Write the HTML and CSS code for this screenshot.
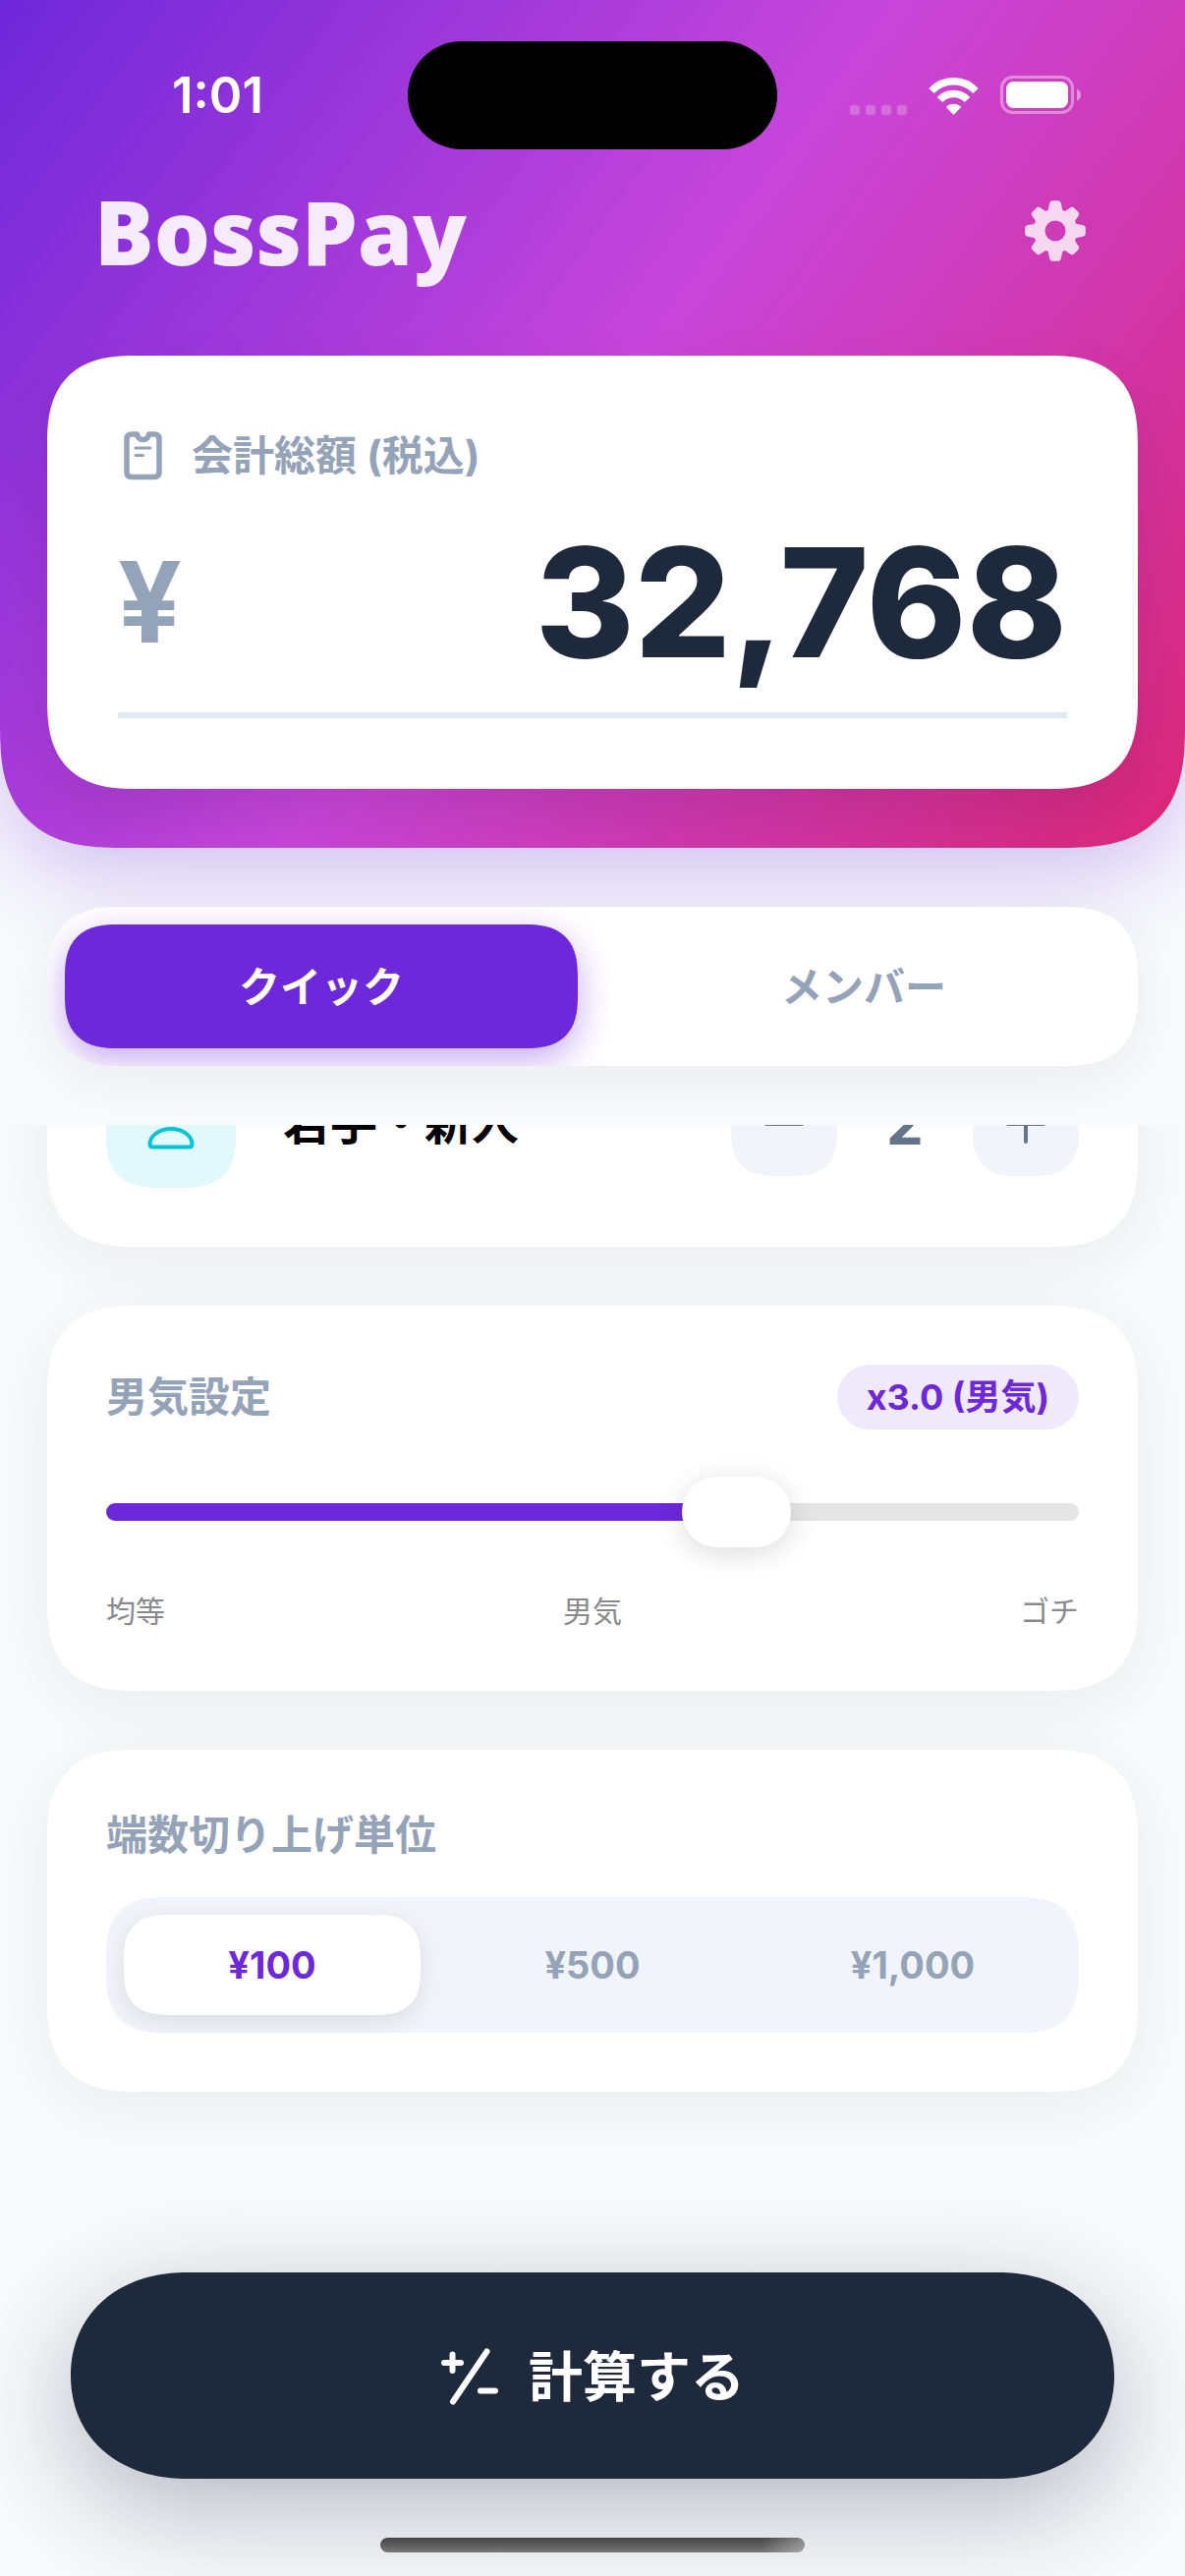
FILE: index.html
```html
<!DOCTYPE html>
<html lang="ja">
<head>
<meta charset="utf-8">
<meta name="viewport" content="width=device-width, initial-scale=1">
<title>BossPay</title>
<link rel="stylesheet" href="styles.css">
</head>
<body>
<div class="app">
  <header class="hero">
    <div class="status">
      <span class="status__time">1:01</span>
      <span class="status__island"></span>
      <span class="status__icons">
        <svg width="58" height="10" viewBox="0 0 58 10" fill="#fff" fill-opacity=".22" aria-hidden="true">
          <rect width="10" height="10" rx="3"/><rect x="16" width="10" height="10" rx="3"/><rect x="32" width="10" height="10" rx="3"/><rect x="48" width="10" height="10" rx="3"/>
        </svg>
        <svg width="51" height="38" viewBox="0 0 51 38" fill="none" aria-hidden="true">
          <path d="M3 13.500A31 31 0 0 1 48 13.500" stroke="#fff" stroke-width="7.500"/>
          <path d="M11.500 22.500A19.500 19.500 0 0 1 39.500 22.500" stroke="#fff" stroke-width="7.500"/>
          <path d="M25.500 38 17.800 30A11 11 0 0 1 33.200 30Z" fill="#fff"/>
        </svg>
        <svg width="83" height="40" viewBox="0 0 83 40" aria-hidden="true">
          <rect x="1.500" y="1.500" width="72" height="36" rx="11" fill="none" stroke="#fff" stroke-opacity=".4" stroke-width="3"/>
          <rect x="6" y="6" width="63" height="27" rx="7.500" fill="#fff"/>
          <path d="M78 13.500q4 2 4 6t-4 6z" fill="#fff" fill-opacity=".45"/>
        </svg>
      </span>
    </div>

    <div class="titlebar">
      <h1 class="titlebar__name">BossPay</h1>
      <button class="titlebar__settings" type="button" aria-label="設定">
        <svg width="62" height="62" viewBox="-31 -31 62 62" aria-hidden="true">
          <defs>
            <mask id="gear-hole" maskUnits="userSpaceOnUse" x="-31" y="-31" width="62" height="62">
              <rect x="-31" y="-31" width="62" height="62" fill="#fff"/>
              <circle r="10.500" fill="#000"/>
            </mask>
          </defs>
          <path mask="url(#gear-hole)" fill="#fff" fill-opacity=".8" d="M-7.300-21-5.800-28.300Q-5.200-30.800-3-30.800H3Q5.200-30.800 5.800-28.300L7.300-21 10-20 15.500-23.700Q17.500-25 19.300-23.300L23.300-19.300Q25-17.500 23.700-15.500L20-10 21-7.300 28.300-5.800Q30.800-5.200 30.800-3V3Q30.800 5.200 28.300 5.800L21 7.300 20 10 23.700 15.500Q25 17.500 23.300 19.300L19.300 23.300Q17.500 25 15.500 23.700L10 20 7.300 21 5.800 28.300Q5.200 30.800 3 30.800H-3Q-5.200 30.800-5.800 28.300L-7.300 21-10 20-15.500 23.700Q-17.500 25-19.300 23.300L-23.300 19.300Q-25 17.500-23.700 15.500L-20 10-21 7.300-28.300 5.800Q-30.800 5.200-30.800 3V-3Q-30.800-5.200-28.300-5.800L-21-7.300-20-10-23.700-15.500Q-25-17.500-23.300-19.300L-19.300-23.300Q-17.500-25-15.500-23.700L-10-20Z"/>
        </svg>
      </button>
    </div>

    <section class="total">
      <label class="total__label" for="amount">
        <svg width="39" height="50" viewBox="0 0 39 50" fill="none" stroke="#94a3b8" aria-hidden="true">
          <path d="M13.500 3H8Q3 3 3 8V41.500Q3 46.500 8 46.500H31Q36 46.500 36 41.500V8Q36 3 31 3H25.500Q24.500 8.500 19.500 8.500T13.500 3Z" stroke-width="5.500" stroke-linejoin="round"/>
          <path d="M12 17H27M12 24.500H19.500" stroke-width="3" stroke-linecap="round"/>
        </svg>
        <span>会計総額 (税込)</span>
      </label>
      <div class="total__row">
        <span class="total__yen">¥</span>
        <input class="total__amount" id="amount" type="text" inputmode="numeric" value="32,768">
      </div>
    </section>
  </header>

  <div class="tabbar">
    <div class="tabs" role="tablist">
      <button class="tabs__item tabs__item--on" type="button" role="tab" aria-selected="true">クイック</button>
      <button class="tabs__item" type="button" role="tab" aria-selected="false">メンバー</button>
    </div>
  </div>

  <main class="list">
    <section class="card card--scrolled">
      <div class="member">
        <span class="member__icon">
          <svg width="48" height="54" viewBox="0 0 48 54" fill="none" stroke="#00c4d4" stroke-width="4" aria-hidden="true">
            <circle cx="24" cy="13" r="11"/>
            <path d="M5 51.500H43Q45.500 51.500 45.500 48C45 40 36 33 24 33S3 40 2.500 48Q2.500 51.500 5 51.500Z"/>
          </svg>
        </span>
        <span class="member__name">若手・新人</span>
        <button class="step" type="button" aria-label="減らす">
          <svg width="42" height="42" viewBox="0 0 42 42" stroke="#64748b" stroke-width="4" stroke-linecap="round" aria-hidden="true"><path d="M3 22H39"/></svg>
        </button>
        <span class="member__count">2</span>
        <button class="step" type="button" aria-label="増やす">
          <svg width="42" height="42" viewBox="0 0 42 42" stroke="#64748b" stroke-width="4" stroke-linecap="round" aria-hidden="true"><path d="M3 22H39M21 3V40"/></svg>
        </button>
      </div>
    </section>

    <section class="card">
      <div class="card__head">
        <label class="card__title" for="ratio">男気設定</label>
        <span class="badge">x3.0 (男気)</span>
      </div>
      <input class="slider" id="ratio" type="range" min="1" max="4" step="0.1" value="3">
      <div class="scale"><span>均等</span><span>男気</span><span>ゴチ</span></div>
    </section>

    <section class="card">
      <h2 class="card__title">端数切り上げ単位</h2>
      <div class="units">
        <label class="units__item"><input type="radio" name="unit" checked><span>¥100</span></label>
        <label class="units__item"><input type="radio" name="unit"><span>¥500</span></label>
        <label class="units__item"><input type="radio" name="unit"><span>¥1,000</span></label>
      </div>
    </section>
  </main>

  <footer class="footer">
    <button class="calc" type="button">
      <svg width="60" height="60" viewBox="0 0 60 60" fill="none" stroke="#fff" stroke-linecap="round" aria-hidden="true">
        <path d="M12.500 8.500V25M4 17H21M41 45.500H56" stroke-width="6"/>
        <path d="M47.500 5.500 13 56.500" stroke-width="6"/>
      </svg>
      <span class="calc__text">計算する</span>
    </button>
    <span class="home"></span>
  </footer>
</div>
</body>
</html>
```
FILE: styles.css
```css
* { box-sizing: border-box; }

:root {
  --purple: #6d28d9;
  --ink: #1e293b;
  --muted: #94a3b8;
  --surface: #f1f5f9;
  --page: #f8fafc;
}

body {
  margin: 0;
  background: var(--page);
  color: #000;
  font-family: Inter, "Noto Sans CJK JP", sans-serif;
}

button, input { font: inherit; color: inherit; border: 0; margin: 0; padding: 0; background: none; }
h1, h2 { margin: 0; }
svg { display: block; flex: none; }

.app { display: flex; flex-direction: column; min-height: 100vh; overflow: hidden; }

/* Header */
.hero {
  position: relative;
  padding: 0 48px 60px;
  border-radius: 0 0 96px 96px;
  background: linear-gradient(126deg, #6d28d9, #c846da 50%, #db2777);
  box-shadow: 0 30px 90px rgba(109, 40, 217, .26);
}

.status {
  display: grid;
  grid-template-columns: 1fr 376px 1fr;
  align-items: center;
  padding-top: 42px;
  color: #fff;
}
.status__time { padding-left: 127px; font-size: 51px; line-height: 60px; font-weight: 600; }
.status__island { height: 110px; border-radius: 55px; background: #000; }
.status__icons { display: flex; align-items: flex-end; gap: 22px; padding-left: 74px; }

.titlebar {
  display: flex;
  justify-content: space-between;
  align-items: center;
  padding: 28px 53px 72px 48px;
}
.titlebar__name {
  color: rgba(255, 255, 255, .9);
  font-family: "Open Sans", sans-serif;
  font-size: 90px;
  line-height: 110px;
  font-weight: 800;
}

.total {
  padding: 72px;
  border-radius: 72px;
  background: #fff;
  box-shadow: 0 30px 60px rgba(0, 0, 0, .1);
}
.total__label {
  display: flex;
  align-items: center;
  gap: 30px;
  padding-left: 6px;
  color: var(--muted);
  font-size: 42px;
  line-height: 60px;
  font-weight: 700;
}
.total__row {
  display: flex;
  align-items: center;
  height: 237px;
  padding-top: 6px;
  border-bottom: 6px solid #e2e8f0;
}
.total__yen { color: var(--muted); font-size: 114px; line-height: 120px; font-weight: 700; }
.total__amount {
  flex: 1;
  min-width: 0;
  height: 190px;
  color: var(--ink);
  font-size: 154px;
  font-weight: 800;
  text-align: right;
}

/* Mode tabs */
.tabbar { padding: 60px 48px; position: relative; }
.tabs {
  display: grid;
  grid-template-columns: 1fr 1fr;
  gap: 30px;
  padding: 18px;
  border-radius: 60px;
  background: #fff;
  box-shadow: 0 15px 60px rgba(0, 0, 0, .06);
  overflow: hidden;
}
.tabs__item {
  height: 126px;
  padding-bottom: 6px;
  border-radius: 42px;
  color: var(--muted);
  font-size: 42px;
  font-weight: 700;
}
.tabs__item--on {
  background: var(--purple);
  color: #fff;
  box-shadow: 0 12px 36px rgba(109, 40, 217, .4);
}

/* Scrolling cards */
.list {
  flex: 1;
  display: flex;
  flex-direction: column;
  gap: 60px;
  padding: 0 48px;
  overflow: hidden;
}
.card {
  display: flex;
  flex-direction: column;
  padding: 60px;
  border-radius: 72px;
  background: #fff;
  box-shadow: 0 15px 72px rgba(0, 0, 0, .06);
}
.card--scrolled { margin-top: -128px; }
.card__head { display: flex; justify-content: space-between; align-items: center; }
.card__title { color: var(--muted); font-size: 42px; line-height: 54px; font-weight: 700; }

.member { display: flex; align-items: center; }
.member__icon {
  display: grid;
  place-items: center;
  width: 132px;
  height: 132px;
  border-radius: 42px;
  background: #e3f8fb;
}
.member__name { flex: 1; padding-left: 48px; font-size: 48px; line-height: 60px; font-weight: 700; }
.member__count { width: 138px; color: #64748b; font-size: 60px; line-height: 72px; font-weight: 700; text-align: center; }
.step {
  display: grid;
  place-items: center;
  width: 108px;
  height: 108px;
  border-radius: 36px;
  background: var(--surface);
}

.badge {
  padding: 9px 30px;
  border-radius: 33px;
  background: #f0e9fb;
  color: var(--purple);
  font-size: 36px;
  line-height: 48px;
  font-weight: 700;
}

.slider { appearance: none; width: 100%; height: 72px; margin: 48px 0 44px; }
.slider::-webkit-slider-runnable-track {
  height: 18px;
  border-radius: 9px;
  background: linear-gradient(90deg, var(--purple) 66%, #e5e5e5 66%);
}
.slider::-webkit-slider-thumb {
  appearance: none;
  width: 111px;
  height: 72px;
  margin-top: -27px;
  border-radius: 36px;
  background: #fff;
  box-shadow: 0 6px 30px rgba(0, 0, 0, .14);
}
.scale {
  display: flex;
  justify-content: space-between;
  color: #8a8a8e;
  font-size: 30px;
  line-height: 42px;
}

.units {
  display: grid;
  grid-template-columns: repeat(3, 1fr);
  gap: 24px;
  margin-top: 36px;
  padding: 18px;
  border-radius: 48px;
  background: var(--surface);
  overflow: hidden;
}
.units__item { position: relative; }
.units__item input { position: absolute; inset: 0; opacity: 0; }
.units__item span {
  display: block;
  border-radius: 36px;
  color: var(--muted);
  font-size: 38px;
  line-height: 102px;
  font-weight: 700;
  text-align: center;
}
.units__item input:checked + span {
  background: #fff;
  color: var(--purple);
  box-shadow: 0 6px 24px rgba(0, 0, 0, .1);
}

/* Bottom action */
.footer {
  position: relative;
  display: flex;
  flex-direction: column;
  align-items: center;
  gap: 60px;
  padding: 0 72px 24px;
}
.calc {
  display: flex;
  justify-content: center;
  align-items: center;
  gap: 30px;
  width: 100%;
  height: 210px;
  border-radius: 105px;
  background: var(--ink);
  color: #fff;
  font-size: 55px;
  font-weight: 700;
  box-shadow: 0 30px 110px rgba(30, 41, 59, .32);
}
.calc__text { padding-bottom: 6px; }
.home {
  width: 432px;
  height: 15px;
  border-radius: 8px;
  background: linear-gradient(90deg, transparent 90%, rgba(255, 255, 255, .35)), linear-gradient(#444, #777);
}

/* Smooth corners: the curve starts further from the corner than a circle's would */
@supports (corner-shape: superellipse(1.4)) {
  .hero, .total, .tabs, .tabs__item, .card, .member__icon, .step, .units, .units__item span { corner-shape: superellipse(1.4); }
  .hero { border-radius: 0 0 123px 123px; }
  .total, .card { border-radius: 92px; }
  .tabs { border-radius: 77px; }
  .tabs__item, .member__icon { border-radius: 54px; }
  .units { border-radius: 60px; }
  .step, .units__item span { border-radius: 46px; }
  .calc { border-radius: 118px / 105px; corner-shape: superellipse(1.1); }
}
```
